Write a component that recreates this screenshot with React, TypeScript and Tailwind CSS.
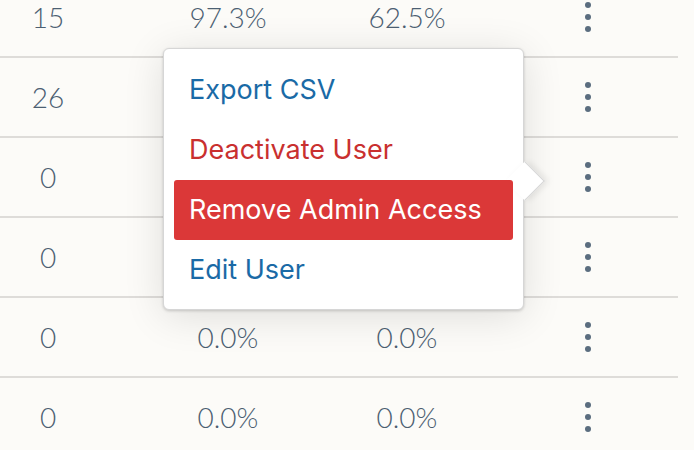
import React from "react";

const rows = [
  ["15", "97.3%", "62.5%"],
  ["26", "", ""],
  ["0", "", ""],
  ["0", "", ""],
  ["0", "0.0%", "0.0%"],
  ["0", "0.0%", "0.0%"],
];

function Dots() {
  return (
    <div className="flex flex-col items-center gap-[6px]">
      <span className="block w-[6px] h-[6px] rounded-full bg-[#5b6d7f]" />
      <span className="block w-[6px] h-[6px] rounded-full bg-[#5b6d7f]" />
      <span className="block w-[6px] h-[6px] rounded-full bg-[#5b6d7f]" />
    </div>
  );
}

export default function App() {
  return (
    <div className="relative w-[694px] h-[450px] overflow-hidden bg-[#fcfbf8] font-['Lato',sans-serif]">
      <div className="mt-[-22px] w-[678px]">
        {rows.map((r, i) => (
          <div
            key={i}
            className="grid grid-cols-[96px_264px_94px_224px] h-[80px] items-center border-b-2 border-[#dedcd9] text-[28px] font-light text-[#4c5f72]"
          >
            <div className="text-center">{r[0]}</div>
            <div className="text-center">{r[1]}</div>
            <div className="text-center">{r[2]}</div>
            <div className="flex pl-[131px]">
              <Dots />
            </div>
          </div>
        ))}
      </div>

      <div className="absolute left-[163px] top-[48px] w-[361px] h-[262px] bg-white rounded-[6px] border border-[#d6d6d6] shadow-[0_6px_40px_rgba(0,0,0,0.12),0_1px_3px_rgba(0,0,0,0.18)]">
        <div className="absolute left-[347px] top-[118px] w-[28px] h-[28px] rotate-45 bg-white border-t border-r border-[#d6d6d6] shadow-[3px_-3px_6px_rgba(0,0,0,0.08)]" />
        <div className="relative flex flex-col px-[10px] pt-[11px] text-[27px] leading-[32px] font-['Inter',sans-serif]">
          <div className="h-[60px] flex items-center px-[15px] text-[#1a6aa6]">Export CSV</div>
          <div className="h-[60px] flex items-center px-[15px] text-[#c9302f]">Deactivate User</div>
          <div className="h-[60px] flex items-center px-[15px] text-white bg-[#db3838] rounded-[3px]">Remove Admin Access</div>
          <div className="h-[60px] flex items-center px-[15px] text-[#1a6aa6]">Edit User</div>
        </div>
      </div>
    </div>
  );
}
